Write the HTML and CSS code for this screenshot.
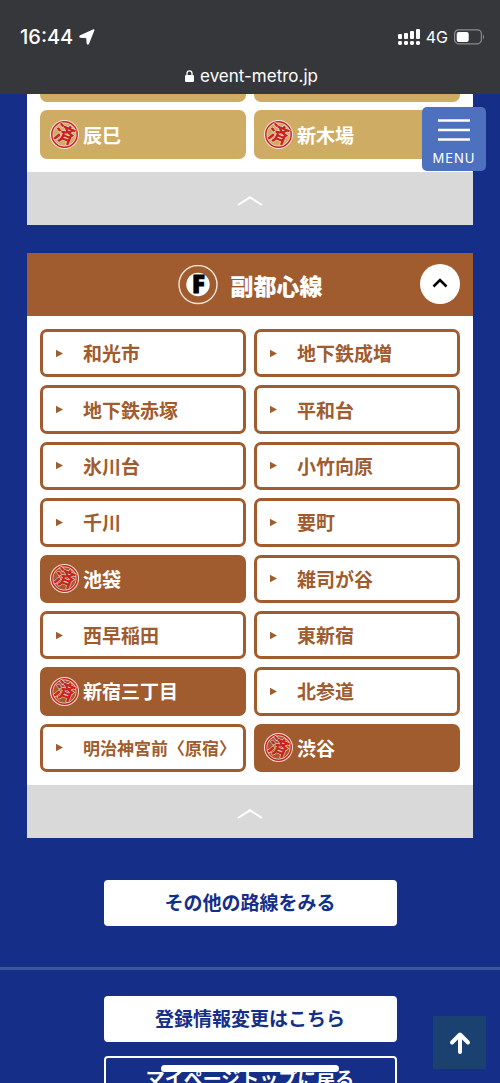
FILE: index.html
```html
<!DOCTYPE html>
<html lang="ja">
<head>
    <meta charset="UTF-8">
    <meta name="viewport" content="width=device-width, initial-scale=1.0">
    <title>event-metro.jp</title>
    <link rel="stylesheet" href="styles.css">
</head>
<body>
    <svg class="defs" width="0" height="0" aria-hidden="true">
        <symbol id="stamp" viewBox="0 0 29 29">
            <circle cx="14.5" cy="14.5" r="12.9" fill="none" stroke="#f6e3d8" stroke-width="3.2"/>
            <circle cx="14.5" cy="14.5" r="12.7" fill="none" stroke="#c9211e" stroke-width="1.5"/>
            <text class="stamp-text" x="14.5" y="21.5" text-anchor="middle" transform="rotate(22 14.5 14.5)">済</text>
        </symbol>
        <symbol id="arrow" viewBox="0 0 29 29">
            <path d="M6 10.8 L13 14.5 L6 18.2 Z" fill="#a05c2e"/>
        </symbol>
    </svg>

    <header class="browser">
        <div class="status">
            <div class="status-left">
                <span class="time">16:44</span>
                <svg width="16" height="16" viewBox="0 0 16 16"><path d="M14.8 1 L9.4 14.4 Q8.8 15.6 8.3 14.3 L7.9 8.5 L1.7 8.1 Q0.3 7.6 1.5 6.8 Z" fill="#fff" stroke="#fff" stroke-width="1.4" stroke-linejoin="round"/></svg>
            </div>
            <div class="status-right">
                <svg width="22" height="16" viewBox="0 0 22 16" fill="#fff">
                    <rect x="0" y="5" width="4" height="5" rx="1"/>
                    <rect x="6" y="4" width="4" height="6" rx="1"/>
                    <rect x="12" y="2" width="4" height="8" rx="1"/>
                    <rect x="18" y="0" width="4" height="10" rx="1"/>
                    <rect x="0" y="12" width="4" height="4" rx="1.4"/>
                    <rect x="6" y="12" width="4" height="4" rx="1.4"/>
                    <rect x="12" y="12" width="4" height="4" rx="1.4"/>
                    <rect x="18" y="12" width="4" height="4" rx="1.4"/>
                </svg>
                <span class="network">4G</span>
                <svg width="31" height="16" viewBox="0 0 31 16">
                    <rect x="0.6" y="0.8" width="26.8" height="14" rx="4" fill="none" stroke="#8b8c8f" stroke-width="1.2"/>
                    <rect x="2.7" y="3" width="12" height="10" rx="2" fill="#fff"/>
                    <path d="M29 5.3 Q31 8 29 10.5 Z" fill="#8b8c8f"/>
                </svg>
            </div>
        </div>
        <div class="address">
            <svg width="9" height="12" viewBox="0 0 9 12"><rect x="0" y="5" width="9" height="7" rx="1.3" fill="#fff"/><path d="M2 6 V3.4 A2.5 2.6 0 0 1 7 3.4 V6" fill="none" stroke="#fff" stroke-width="1.3"/></svg>
            <span>event-metro.jp</span>
        </div>
    </header>

    <main class="page">
        <section class="line-card gold">
            <div class="list-tail"><span></span><span></span></div>
            <div class="stations">
                <a href="#" class="station done"><svg class="mark"><use href="#stamp"/></svg>辰巳</a>
                <a href="#" class="station done"><svg class="mark"><use href="#stamp"/></svg>新木場</a>
            </div>
            <button class="close" aria-label="閉じる"><svg width="26" height="10" viewBox="0 0 26 10"><path d="M1 9 L13 1.3 L25 9" fill="none" stroke="#fff" stroke-width="2"/></svg></button>
        </section>

        <section class="line-card brown">
            <div class="line-head">
                <svg width="40" height="40" viewBox="0 0 40 40">
                    <circle cx="20" cy="19.5" r="19" fill="none" stroke="#f3e4da" stroke-width="1.4"/>
                    <circle cx="20" cy="19.5" r="11.7" fill="#fff"/>
                    <text class="line-letter" x="20.5" y="28" text-anchor="middle">F</text>
                </svg>
                <h2>副都心線</h2>
                <button class="toggle" aria-label="閉じる"><svg width="16" height="10" viewBox="0 0 16 10"><path d="M1.5 8.5 L8 2 L14.5 8.5" fill="none" stroke="#000" stroke-width="2.6"/></svg></button>
            </div>
            <div class="stations full">
                <a href="#" class="station"><svg class="mark"><use href="#arrow"/></svg>和光市</a>
                <a href="#" class="station"><svg class="mark"><use href="#arrow"/></svg>地下鉄成増</a>
                <a href="#" class="station"><svg class="mark"><use href="#arrow"/></svg>地下鉄赤塚</a>
                <a href="#" class="station"><svg class="mark"><use href="#arrow"/></svg>平和台</a>
                <a href="#" class="station"><svg class="mark"><use href="#arrow"/></svg>氷川台</a>
                <a href="#" class="station"><svg class="mark"><use href="#arrow"/></svg>小竹向原</a>
                <a href="#" class="station"><svg class="mark"><use href="#arrow"/></svg>千川</a>
                <a href="#" class="station"><svg class="mark"><use href="#arrow"/></svg>要町</a>
                <a href="#" class="station done"><svg class="mark"><use href="#stamp"/></svg>池袋</a>
                <a href="#" class="station"><svg class="mark"><use href="#arrow"/></svg>雑司が谷</a>
                <a href="#" class="station"><svg class="mark"><use href="#arrow"/></svg>西早稲田</a>
                <a href="#" class="station"><svg class="mark"><use href="#arrow"/></svg>東新宿</a>
                <a href="#" class="station done"><svg class="mark"><use href="#stamp"/></svg>新宿三丁目</a>
                <a href="#" class="station"><svg class="mark"><use href="#arrow"/></svg>北参道</a>
                <a href="#" class="station long"><svg class="mark"><use href="#arrow"/></svg>明治神宮前〈原宿〉</a>
                <a href="#" class="station done"><svg class="mark"><use href="#stamp"/></svg>渋谷</a>
            </div>
            <button class="close" aria-label="閉じる"><svg width="26" height="10" viewBox="0 0 26 10"><path d="M1 9 L13 1.3 L25 9" fill="none" stroke="#fff" stroke-width="2"/></svg></button>
        </section>

        <div class="more">
            <a href="#" class="btn">その他の路線をみる</a>
        </div>
        <div class="links">
            <a href="#" class="btn">登録情報変更はこちら</a>
            <a href="#" class="btn outline">マイページトップに戻る</a>
        </div>

        <button class="menu">
            <svg width="32" height="23" viewBox="0 0 32 23"><path d="M0 1.5 H32 M0 11 H32 M0 20.5 H32" stroke="#fff" stroke-width="2.6"/></svg>
            MENU
        </button>
        <a href="#" class="to-top" aria-label="トップへ"><svg width="22" height="24" viewBox="0 0 22 24"><path d="M11 21 V4 M3 11.5 L11 3.5 L19 11.5" fill="none" stroke="#fff" stroke-width="4" stroke-linecap="round" stroke-linejoin="round"/></svg></a>
        <div class="home-bar"></div>
    </main>
</body>
</html>
```

FILE: styles.css
```css
* {
    box-sizing: border-box;
}
body {
    margin: 0;
    height: 100vh;
    display: flex;
    flex-direction: column;
    overflow: hidden;
    background: #152f89;
    font-family: "Noto Sans CJK JP", sans-serif;
}
a {
    text-decoration: none;
}
button {
    border: 0;
    padding: 0;
    font-family: inherit;
}
svg {
    display: block;
    flex: none;
}
.defs {
    position: absolute;
}

/* browser bar */
.browser {
    flex: none;
    height: 94px;
    padding-top: 24px;
    background: #36373b;
    color: #fff;
    font-family: Inter, sans-serif;
}
.status {
    display: flex;
    justify-content: space-between;
    align-items: center;
    height: 26px;
    padding: 0 15px 0 20px;
}
.status-left, .status-right {
    display: flex;
    align-items: center;
    gap: 6px;
}
.time {
    font-size: 20px;
    font-weight: 500;
}
.network {
    font-size: 16px;
}
.address {
    display: flex;
    justify-content: center;
    align-items: center;
    gap: 6px;
    height: 24px;
    margin-top: 14px;
    padding-left: 3px;
    font-size: 17px;
}

/* page */
.page {
    position: relative;
    flex: 1;
    min-height: 0;
    overflow: hidden;
}
.line-card {
    margin: 0 27px 28px;
    background: #fff;
}
.list-tail {
    display: grid;
    grid-template-columns: 1fr 1fr;
    gap: 8px;
    padding: 0 13px;
}
.list-tail span {
    height: 8px;
    border-radius: 0 0 7px 7px;
    background: #ceac64;
}
.stations {
    display: grid;
    grid-template-columns: 1fr 1fr;
    gap: 8px;
    padding: 8px 13px 13px;
}
.stations.full {
    min-height: 469px;
    padding: 13px;
}
.station {
    display: flex;
    align-items: center;
    gap: 4px;
    min-height: 48px;
    padding-left: 7px;
    border: 3px solid #a05c2e;
    border-radius: 7px;
    color: #a05c2e;
    font-size: 19px;
    font-weight: 700;
    line-height: 24px;
    white-space: nowrap;
}
.station.done {
    background: #a05c2e;
    color: #fff;
}
.gold .station.done {
    min-height: 49px;
    border-color: #ceac64;
    background: #ceac64;
}
.station.long {
    font-size: 17px;
}
.mark {
    width: 29px;
    height: 29px;
}
.stamp-text {
    fill: #c9211e;
    stroke: #f6e3d8;
    stroke-width: 1px;
    paint-order: stroke;
    font-size: 20px;
    font-weight: 700;
}
.close {
    display: flex;
    justify-content: center;
    align-items: center;
    width: 100%;
    height: 53px;
    padding-top: 5px;
    background: #d9d9d9;
}
.line-head {
    position: relative;
    display: flex;
    justify-content: center;
    align-items: center;
    gap: 13px;
    height: 63px;
    background: #a05c2e;
    color: #fff;
}
.line-head h2 {
    margin: 0;
    font-size: 23px;
    font-weight: 900;
    line-height: 32px;
}
.line-letter {
    font-family: "Open Sans", sans-serif;
    font-size: 24px;
    font-weight: 800;
    stroke: #000;
    stroke-width: 1px;
}
.toggle {
    position: absolute;
    top: 11px;
    right: 13px;
    display: flex;
    justify-content: center;
    align-items: center;
    width: 40px;
    height: 40px;
    padding-bottom: 2px;
    border-radius: 50%;
    background: #fff;
}

/* buttons */
.more {
    padding: 14px 0 41px;
    border-bottom: 3px solid #3e559f;
}
.links {
    display: flex;
    flex-direction: column;
    gap: 14px;
    padding-top: 26px;
}
.btn {
    display: flex;
    justify-content: center;
    align-items: center;
    width: 293px;
    height: 46px;
    margin: 0 auto;
    padding-bottom: 2px;
    border: 2px solid #fff;
    border-radius: 4px;
    background: #fff;
    color: #152f89;
    font-size: 19px;
    font-weight: 700;
    line-height: 24px;
}
.btn.outline {
    background: none;
    color: #fff;
}
.menu {
    position: absolute;
    top: 13px;
    right: 14px;
    display: flex;
    flex-direction: column;
    align-items: center;
    gap: 8px;
    width: 64px;
    height: 64px;
    padding-top: 12px;
    border-radius: 5px;
    background: #4d71be;
    color: #fff;
    font-family: Inter, sans-serif;
    font-size: 13px;
    line-height: 16px;
    letter-spacing: 1px;
}
.to-top {
    position: absolute;
    right: 14px;
    bottom: 14px;
    display: flex;
    justify-content: center;
    align-items: center;
    width: 53px;
    height: 53px;
    background: #1a416f;
}
.home-bar {
    position: absolute;
    left: 50%;
    bottom: 11px;
    width: 178px;
    height: 7px;
    margin-left: -89px;
    border-radius: 4px;
    background: #fff;
}
```
